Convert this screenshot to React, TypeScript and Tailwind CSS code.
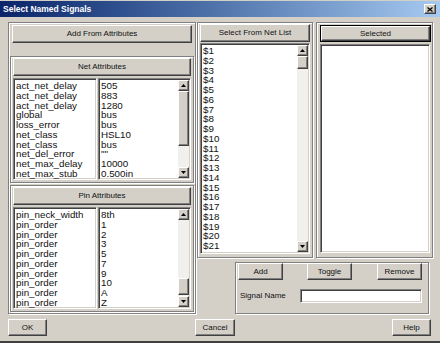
import React from 'react';

const raised =
  'bg-[#d4d0c8] border border-t-white border-l-white border-r-[#404040] border-b-[#404040] shadow-[inset_-1px_-1px_0_#808080]';
const sunken =
  'bg-white border border-t-[#808080] border-l-[#808080] border-r-white border-b-white shadow-[inset_1px_1px_0_#404040,inset_-1px_-1px_0_#d4d0c8]';
const etched = 'border border-[#808080] shadow-[inset_1px_1px_0_#ffffff,1px_1px_0_#ffffff]';

const netNames = [
  'act_net_delay',
  'act_net_delay',
  'act_net_delay',
  'global',
  'loss_error',
  'net_class',
  'net_class',
  'net_del_error',
  'net_max_delay',
  'net_max_stub',
];
const netValues = ['505', '883', '1280', 'bus', 'bus', 'HSL10', 'bus', '""', '10000', '0.500in'];

const pinNames = [
  'pin_neck_width',
  'pin_order',
  'pin_order',
  'pin_order',
  'pin_order',
  'pin_order',
  'pin_order',
  'pin_order',
  'pin_order',
  'pin_order',
];
const pinValues = ['8th', '1', '2', '3', '5', '7', '9', '10', 'A', 'Z'];

const nets = Array.from({ length: 21 }, (_, i) => `$${i + 1}`);

function Btn({ children, className = '' }: { children: React.ReactNode; className?: string }) {
  return (
    <div className={`${raised} flex items-center justify-center text-[8px] text-[#111] shrink-0 ${className}`}>
      {children}
    </div>
  );
}

function Arrow({ up }: { up?: boolean }) {
  return (
    <div className={`${raised} w-[11px] h-[11px] flex items-center justify-center shrink-0`}>
      <svg width="5" height="3" viewBox="0 0 5 3">
        <polygon points={up ? '2.5,0 5,3 0,3' : '0,0 5,0 2.5,3'} fill="#000" />
      </svg>
    </div>
  );
}

function ScrollBar({ gap, thumb }: { gap: string; thumb: string }) {
  return (
    <div className="w-[11px] h-full flex flex-col bg-[#f1f0ec] shrink-0">
      <Arrow up />
      <div className={`${gap} shrink-0`} />
      <div className={`${raised} ${thumb} shrink-0`} />
      <div className="flex-1" />
      <Arrow />
    </div>
  );
}

function Rows({ items }: { items: string[] }) {
  return (
    <div className="text-[9.8px] leading-[9.75px] text-[#111] pl-[2px] pt-[2px] whitespace-nowrap">
      {items.map((t, i) => (
        <div key={i} className="h-[9.75px]">
          {t}
        </div>
      ))}
    </div>
  );
}

function AttrFrame({
  title,
  names,
  values,
  gap,
  thumb,
}: {
  title: string;
  names: string[];
  values: string[];
  gap: string;
  thumb: string;
}) {
  return (
    <div className={`${etched} ml-px w-[184px] h-[127px] flex flex-col shrink-0`}>
      <Btn className="ml-[2px] mt-px w-[178px] h-[18px]">{title}</Btn>
      <div className="flex mt-[2px] ml-[2px] h-[102px]">
        <div className={`${sunken} w-[84px] h-full overflow-hidden`}>
          <Rows items={names} />
        </div>
        <div className={`${sunken} ml-px w-[93px] h-full flex overflow-hidden`}>
          <div className="flex-1">
            <Rows items={values} />
          </div>
          <div className="py-px pr-px h-full">
            <ScrollBar gap={gap} thumb={thumb} />
          </div>
        </div>
      </div>
    </div>
  );
}

export default function App() {
  return (
    <div className="w-[440px] h-[343px] bg-[#d4d0c8] font-['Liberation_Sans',Arial,sans-serif] flex flex-col border-b-2 border-b-[#404040] overflow-hidden">
      <div className="mt-px h-[16px] shrink-0 bg-linear-to-r from-[#0a246a] to-[#a6caf0] flex items-center pl-[3px] pr-[4px]">
        <span className="text-white font-bold text-[8.5px]">Select Named Signals</span>
        <div className={`${raised} ml-auto w-[12px] h-[10px] flex items-center justify-center`}>
          <svg width="6" height="5" viewBox="0 0 6 5">
            <path d="M0.5 0.5 L5.5 4.5 M5.5 0.5 L0.5 4.5" stroke="#000" strokeWidth="1.3" />
          </svg>
        </div>
      </div>

      <div className="flex mt-[5px] pl-[8px] h-[292px] shrink-0">
        <div className={`${etched} w-[188px] h-full flex flex-col`}>
          <Btn className="ml-[3px] mt-[2px] w-[180px] h-[18px]">Add From Attributes</Btn>
          <div className="mt-[13px]">
            <AttrFrame title="Net Attributes" names={netNames} values={netValues} gap="h-0" thumb="h-[55px]" />
          </div>
          <div className="mt-[2px]">
            <AttrFrame title="Pin Attributes" names={pinNames} values={pinValues} gap="h-[58px]" thumb="h-[17px]" />
          </div>
        </div>

        <div className="ml-px w-[236px] flex flex-col">
          <div className="flex h-[236px]">
            <div className={`${etched} w-[116px] h-full flex flex-col`}>
              <Btn className="ml-[2px] mt-px w-[110px] h-[18px]">Select From Net List</Btn>
              <div className={`${sunken} ml-[2px] mt-px w-[110px] h-[211px] flex`}>
                <div className="flex-1">
                  <Rows items={nets} />
                </div>
                <div className="py-px pr-px h-full">
                  <ScrollBar gap="h-0" thumb="h-[13px]" />
                </div>
              </div>
            </div>
            <div className={`${etched} ml-[3px] w-[117px] h-full flex flex-col`}>
              <div className="ml-[3px] mt-[2px] w-[111px] h-[17px] border border-black">
                <Btn className="w-full h-full">Selected</Btn>
              </div>
              <div className={`${sunken} ml-[3px] mt-[2px] w-[110px] h-[209px]`} />
            </div>
          </div>

          <div className={`${etched} mt-[4px] ml-[38px] w-[194px] h-[52px] flex flex-col`}>
            <div className="flex">
              <Btn className="ml-[2px] w-[45px] h-[17px]">Add</Btn>
              <Btn className="ml-[24px] w-[45px] h-[17px]">Toggle</Btn>
              <Btn className="ml-[25px] w-[45px] h-[17px]">Remove</Btn>
            </div>
            <div className="flex items-center mt-[9px] h-[14px]">
              <span className="ml-[4px] w-[45px] text-[8px] text-[#111] whitespace-nowrap">Signal Name</span>
              <div className={`${sunken} ml-[15px] w-[122px] h-[14px]`} />
            </div>
          </div>
        </div>
      </div>

      <div className="flex mt-[5px] h-[17px] shrink-0">
        <Btn className="ml-[8px] w-[39px] h-[17px]">OK</Btn>
        <Btn className="ml-[148px] w-[40px] h-[17px]">Cancel</Btn>
        <Btn className="ml-[157px] w-[39px] h-[17px]">Help</Btn>
      </div>
    </div>
  );
}
